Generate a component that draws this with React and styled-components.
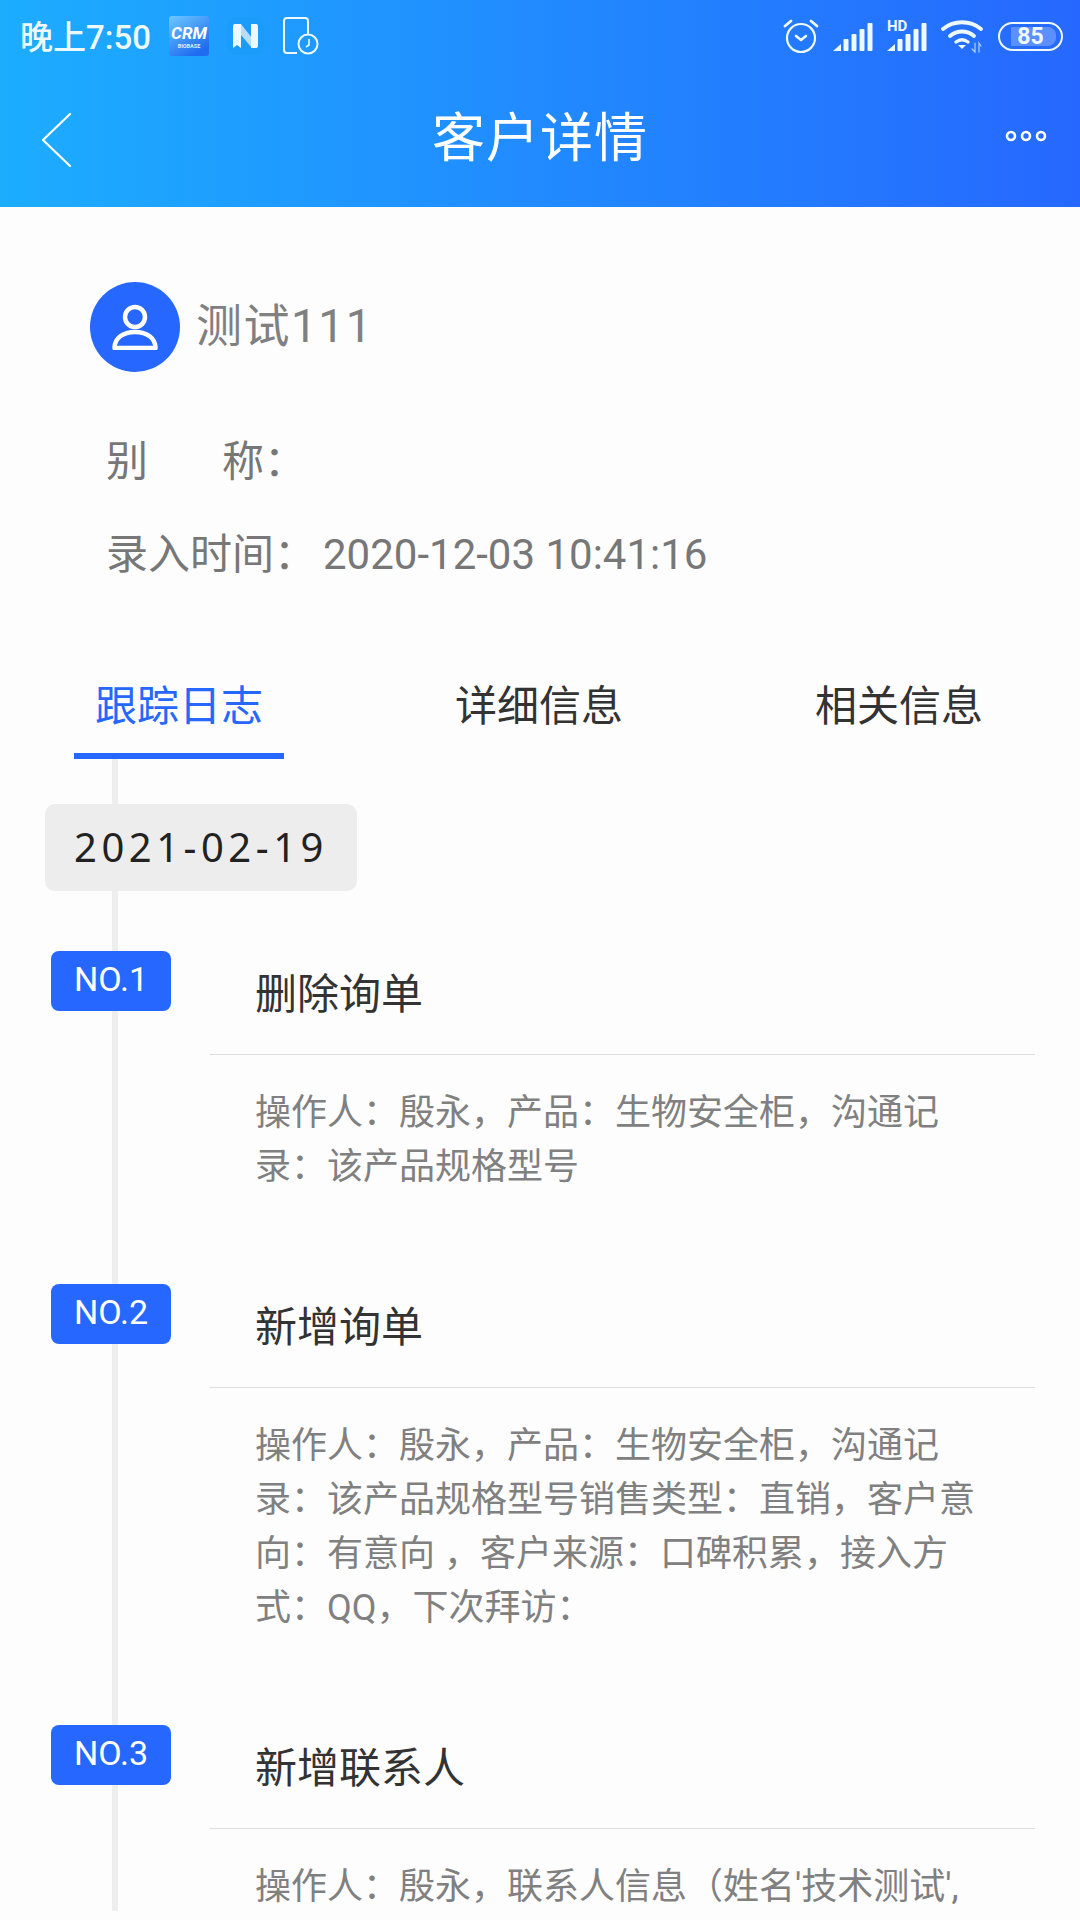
import React from 'react'
import styled, { createGlobalStyle } from 'styled-components'

const GlobalStyle = createGlobalStyle`
  html, body {
    margin: 0;
    padding: 0;
    background: #fdfdfd;
    font-family: Roboto, "Noto Sans CJK SC", sans-serif;
  }
  * { box-sizing: border-box; }
`

const Page = styled.div`
  width: 1080px;
  height: 1920px;
  overflow: hidden;
  background: #fdfdfd;
`

const Header = styled.header`
  height: 207px;
  background: linear-gradient(90deg, #1cadff 0%, #2668ff 100%);
  color: #fff;
`

const StatusBar = styled.div`
  height: 72px;
  display: flex;
  align-items: center;
  justify-content: space-between;
  padding: 0 17px 0 20px;
`

const StatusGroup = styled.div`
  display: flex;
  align-items: center;
  gap: ${p => p.$gap || 0}px;
`

const Clock = styled.span`
  font-size: 33px;
  font-weight: 500;
  color: #eef8ff;
  margin-bottom: 3px;
`

const NavBar = styled.div`
  height: 135px;
  display: flex;
  align-items: center;
  justify-content: space-between;
  padding: 0 32px 0 42px;

  svg:last-child {
    margin-bottom: 7px;
  }
`

const NavTitle = styled.h1`
  margin: 0 0 0 4px;
  font-size: 53px;
  font-weight: 400;
  letter-spacing: 1px;
  line-height: 1;
`

const Profile = styled.section`
  padding: 75px 0 0 90px;
`

const NameRow = styled.div`
  display: flex;
  align-items: center;
  gap: 16px;
  margin-bottom: 40px;
`

const Avatar = styled.div`
  width: 90px;
  height: 90px;
  border-radius: 50%;
  background: #2668ff;
  display: flex;
  align-items: center;
  justify-content: center;
`

const Name = styled.span`
  font-size: 46px;
  line-height: 60px;
  padding-bottom: 2px;
  color: #808080;
  letter-spacing: 1.500px;
`

const InfoRow = styled.div`
  height: 93px;
  display: flex;
  align-items: baseline;
  padding: 22px 0 0 16px;
  font-size: 42px;
  line-height: 56px;
  color: #777;
`

const InfoLabel = styled.span`
  width: 217px;
  display: flex;
  gap: ${p => (p.$spread ? '74px' : '0')};
`

const Tabs = styled.nav`
  margin-top: 71px;
  display: flex;
  padding-left: 74px;
  gap: 150px;
`

const Tab = styled.div`
  width: 210px;
  height: 90px;
  font-size: 42px;
  text-align: center;
  line-height: 76px;
  color: ${p => (p.$active ? '#2668ff' : '#333')};
  border-bottom: 6px solid ${p => (p.$active ? '#2668ff' : 'transparent')};
`

// grey rail that runs behind the date chip and the NO. badges
const Timeline = styled.div`
  position: relative;
  height: 1152px;
  overflow: hidden;
  padding: 45px 45px 0;

  &::before {
    content: '';
    position: absolute;
    top: 0;
    bottom: 0;
    left: 112px;
    width: 6px;
    background: #eeeeee;
  }
`

const DateChip = styled.div`
  position: relative;
  width: 312px;
  height: 87px;
  border-radius: 10px;
  background: #ededed;
  color: #222;
  font-family: "Noto Sans", sans-serif;
  font-size: 40px;
  letter-spacing: 4.500px;
  line-height: 85px;
  text-align: center;
`

const Entry = styled.article`
  position: relative;
  display: flex;
  margin-top: ${p => (p.$first ? '60px' : '0')};
  padding-bottom: 90px;
`

const Badge = styled.div`
  position: relative;
  flex: none;
  width: 120px;
  height: 60px;
  margin-left: 6px;
  border-radius: 8px;
  background: #2668ff;
  color: #fff;
  font-size: 34px;
  line-height: 56px;
  text-align: center;
`

const EntryBody = styled.div`
  flex: none;
  width: 825px;
  margin-left: 39px;
`

const EntryTitle = styled.h3`
  margin: 0;
  height: 104px;
  padding: 16px 0 0 45px;
  border-bottom: 1px solid #dedede;
  font-size: 42px;
  font-weight: 400;
  line-height: 56px;
  color: #333;
`

const EntryText = styled.p`
  margin: 0;
  padding: 31px 45px 0 45px;
  font-size: 36px;
  line-height: 54px;
  color: #808080;
`

const BackIcon = () => (
  <svg width="30" height="56" viewBox="0 0 30 56" fill="none" stroke="#fff" strokeWidth="2.200" strokeLinecap="round" strokeLinejoin="round">
    <path d="M28 2 1 28l27 26" />
  </svg>
)

const MoreIcon = () => (
  <svg width="44" height="14" viewBox="0 0 44 14" fill="none" stroke="#fff" strokeWidth="2.600">
    <circle cx="7" cy="7" r="4" />
    <circle cx="22" cy="7" r="4" />
    <circle cx="37" cy="7" r="4" />
  </svg>
)

const UserIcon = () => (
  <svg width="46" height="46" viewBox="0 0 46 46" fill="none" stroke="#fff" strokeWidth="4.500" strokeLinejoin="round">
    <circle cx="23" cy="13" r="10" />
    <path d="M2.500 44C2.500 34 11 28 23 28S43.500 34 43.500 44Z" />
  </svg>
)

const CrmLogo = () => (
  <svg width="40" height="40" viewBox="0 0 40 40">
    <defs>
      <linearGradient id="crmBg" x1="0" y1="0" x2="0.6" y2="1">
        <stop offset="0" stopColor="#6cc8ff" />
        <stop offset="1" stopColor="#1f6cf0" />
      </linearGradient>
    </defs>
    <rect width="40" height="40" rx="3" fill="url(#crmBg)" />
    <text x="20" y="23" textAnchor="middle" fontSize="17" fontWeight="700" fontStyle="italic" fill="#fff" fontFamily="Roboto, sans-serif">CRM</text>
    <text x="20" y="32" textAnchor="middle" fontSize="5.500" fontWeight="700" fill="#dff1ff" fontFamily="Roboto, sans-serif">BIOBASE</text>
  </svg>
)

const NoteLogo = () => (
  <svg width="38" height="38" viewBox="0 0 38 38">
    <rect width="38" height="38" rx="9" fill="#1c9cfa" />
    <path d="M14 7l11 14V31L14 18z" fill="#b8dcfa" />
    <path d="M6 9a2 2 0 0 1 2-2h6v24l-4-3-4 3z" fill="#eef8ff" />
    <path d="M24 7h5a2 2 0 0 1 2 2v20a2 2 0 0 1-2 2h-5z" fill="#eef8ff" />
  </svg>
)

const FileClock = () => (
  <svg width="36" height="38" viewBox="0 0 36 38" fill="none" stroke="#eef8ff" strokeWidth="2">
    <path d="M14 36H4a3 3 0 0 1-3-3V4a3 3 0 0 1 3-3h18a3 3 0 0 1 3 3v14" />
    <circle cx="25" cy="27" r="9.500" />
    <path d="M26 22v6l-3 2" strokeWidth="1.600" />
  </svg>
)

const AlarmIcon = () => (
  <svg width="36" height="36" viewBox="0 0 36 36" fill="none" stroke="#eef8ff" strokeWidth="2.200" strokeLinecap="round" strokeLinejoin="round">
    <circle cx="18" cy="20" r="14" />
    <path d="M2 8l6-5M34 8l-6-5" strokeWidth="2.800" />
    <path d="M13 18l5 4 5-4" strokeWidth="2.600" />
  </svg>
)

const barHeights = [12, 17, 22, 28]

const SignalBars = ({ hd }) => (
  <svg width="40" height="32" viewBox="0 0 40 32" fill="#eef8ff" overflow="visible">
    {hd && <text x="0" y="11" fontSize="15" fontWeight="700" fontFamily="Roboto, sans-serif">HD</text>}
    <path d="M0 31l8-7v7z" />
    {barHeights.map((h, i) => (
      <rect key={h} x={10.5 + i * 8} y={31 - h} width="5" height={h} rx="1" />
    ))}
  </svg>
)

const WifiIcon = () => (
  <svg width="43" height="36" viewBox="0 0 43 36" fill="none" stroke="#eef8ff" strokeWidth="3.800" strokeLinecap="round">
    <path d="M2 11c11-9 27-9 38 0" />
    <path d="M9 18c7-6 17-6 24 0" />
    <path d="M15 24c4-3 8-3 12 0" strokeWidth="3.400" />
    <path d="M17 27h8l-4 4z" fill="#eef8ff" stroke="none" />
    <path d="M34 25v9l-3-3M38 34v-9l2 3" strokeWidth="1.200" opacity="0.7" />
  </svg>
)

const Battery = () => (
  <BatteryShell>
    <BatteryFill />
    <BatteryLevel>85</BatteryLevel>
  </BatteryShell>
)

const BatteryShell = styled.div`
  position: relative;
  width: 65px;
  height: 29px;
  border: 2.500px solid #eef8ff;
  border-radius: 15px;
  overflow: hidden;
  display: flex;
  align-items: center;
  justify-content: center;
`

const BatteryFill = styled.div`
  position: absolute;
  left: 11px;
  top: 3px;
  bottom: 3px;
  width: 45px;
  background: rgba(255, 255, 255, 0.25);
  border-radius: 0 8px 8px 0;
`

const BatteryLevel = styled.span`
  position: relative;
  font-size: 23px;
  font-weight: 700;
  line-height: 1;
  color: #eef8ff;
`

const entries = [
  {
    no: 'NO.1',
    title: '删除询单',
    text: '操作人\uFF1A殷永\uFF0C产品\uFF1A生物安全柜\uFF0C沟通记录\uFF1A该产品规格型号',
  },
  {
    no: 'NO.2',
    title: '新增询单',
    text: '操作人\uFF1A殷永\uFF0C产品\uFF1A生物安全柜\uFF0C沟通记录\uFF1A该产品规格型号销售类型\uFF1A直销\uFF0C客户意向\uFF1A有意向 \uFF0C客户来源\uFF1A口碑积累\uFF0C接入方式\uFF1AQQ\uFF0C下次拜访\uFF1A',
  },
  {
    no: 'NO.3',
    title: '新增联系人',
    text: "操作人\uFF1A殷永\uFF0C联系人信息\uFF08姓名'技术测试',",
  },
]

function App() {
  return (
    <Page>
      <GlobalStyle />
      <Header>
        <StatusBar>
          <StatusGroup $gap={18}>
            <Clock>晚上7:50</Clock>
            <CrmLogo />
            <NoteLogo />
            <FileClock />
          </StatusGroup>
          <StatusGroup $gap={14}>
            <AlarmIcon />
            <SignalBars />
            <SignalBars hd />
            <WifiIcon />
            <Battery />
          </StatusGroup>
        </StatusBar>
        <NavBar>
          <BackIcon />
          <NavTitle>客户详情</NavTitle>
          <MoreIcon />
        </NavBar>
      </Header>

      <Profile>
        <NameRow>
          <Avatar><UserIcon /></Avatar>
          <Name>测试111</Name>
        </NameRow>
        <InfoRow>
          <InfoLabel $spread><span>别</span><span>{'称\uFF1A'}</span></InfoLabel>
        </InfoRow>
        <InfoRow>
          <InfoLabel>{'录入时间\uFF1A'}</InfoLabel>
          <span>2020-12-03 10:41:16</span>
        </InfoRow>
      </Profile>

      <Tabs>
        <Tab $active>跟踪日志</Tab>
        <Tab>详细信息</Tab>
        <Tab>相关信息</Tab>
      </Tabs>

      <Timeline>
        <DateChip>2021-02-19</DateChip>
        {entries.map((entry, i) => (
          <Entry key={entry.no} $first={i === 0}>
            <Badge>{entry.no}</Badge>
            <EntryBody>
              <EntryTitle>{entry.title}</EntryTitle>
              <EntryText>{entry.text}</EntryText>
            </EntryBody>
          </Entry>
        ))}
      </Timeline>
    </Page>
  )
}

export default App
